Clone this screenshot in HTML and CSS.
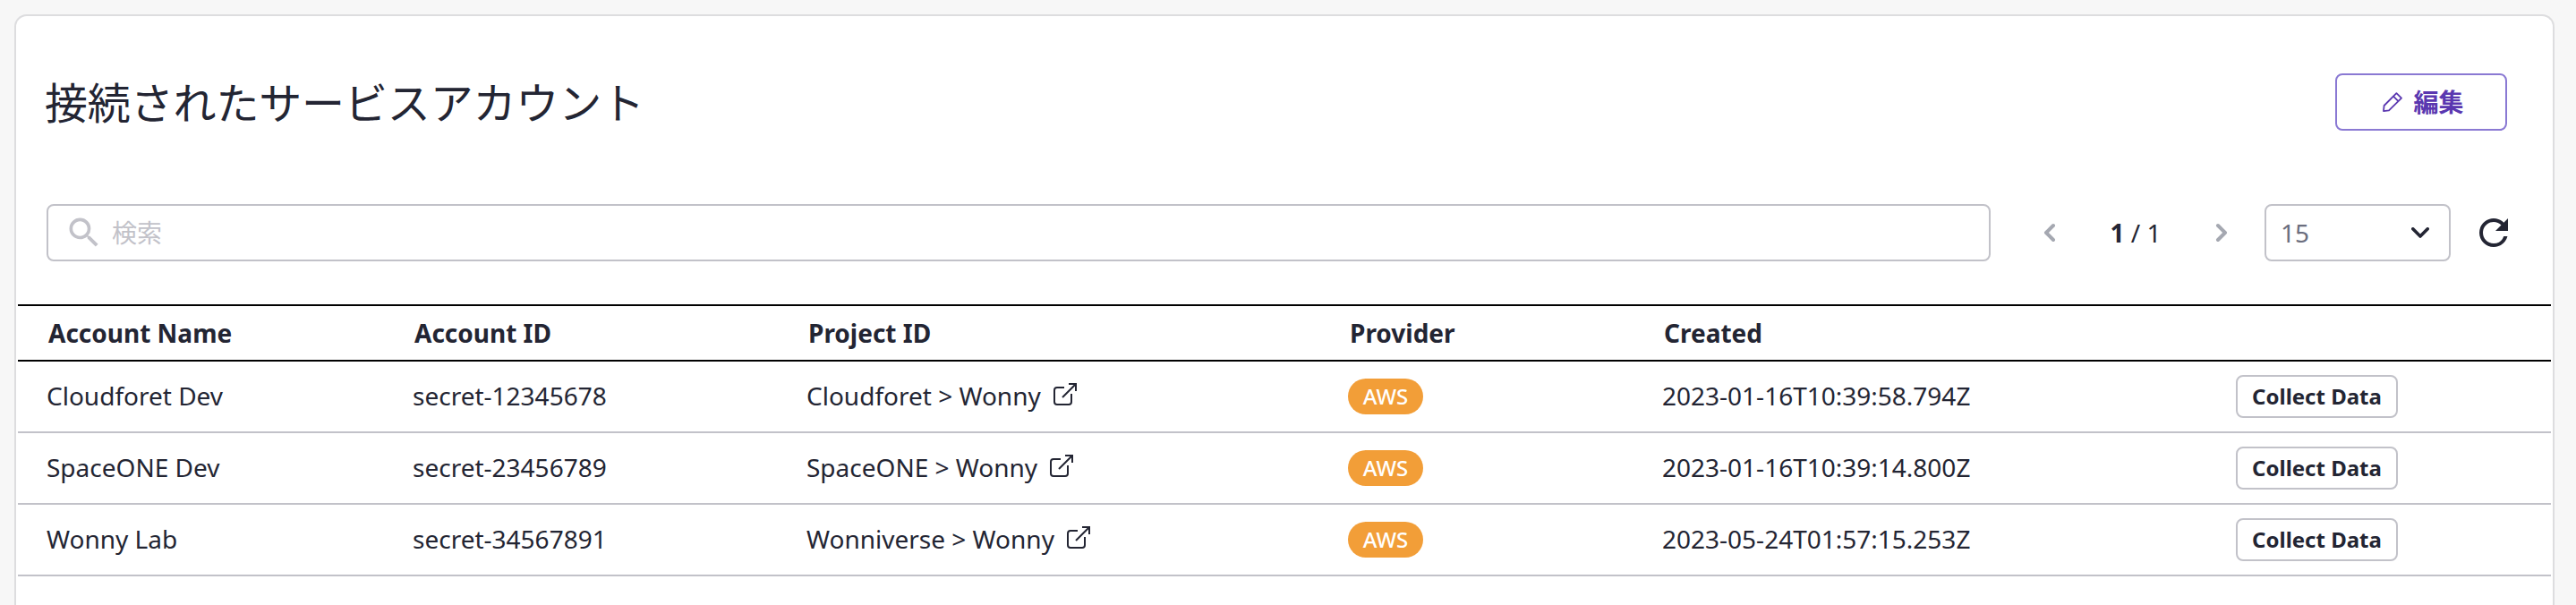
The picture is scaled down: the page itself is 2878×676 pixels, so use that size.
FILE: index.html
```html
<!DOCTYPE html>
<html lang="ja">
<head>
<meta charset="utf-8">
<title>接続されたサービスアカウント</title>
<link rel="stylesheet" href="styles.css">
</head>
<body>
<svg width="0" height="0" class="defs">
  <symbol id="external" viewBox="0 0 26 26"><path d="M12 5H4a3 3 0 0 0-3 3v13a3 3 0 0 0 3 3h13a3 3 0 0 0 3-3v-9M10 16 24 2M17 1h8v8" fill="none" stroke="currentColor" stroke-width="2"/></symbol>
</svg>
<main class="card">
  <header class="head">
    <h1 class="title">接続されたサービスアカウント</h1>
    <button class="edit">
      <svg width="24" height="24" viewBox="0 0 24 24" fill="none" stroke="currentColor" stroke-width="1.8" stroke-linejoin="round"><path d="M2 22.2 2.6 16 16.4 2.1 22 7.7 8 21.4ZM13 5.6l5.5 5.5"/></svg>
      <span>編集</span>
    </button>
  </header>
  <div class="toolbar">
    <div class="search">
      <svg width="44" height="44" viewBox="0 0 24 24" fill="currentColor"><path d="M15.5 14h-.79l-.28-.27A6.47 6.47 0 0 0 16 9.5 6.5 6.5 0 1 0 9.5 16c1.61 0 3.09-.59 4.23-1.57l.27.28v.79l5 4.99L20.49 19l-4.99-5zm-6 0C7.01 14 5 11.99 5 9.5S7.01 5 9.5 5 14 7.01 14 9.5 11.99 14 9.5 14z"/></svg>
      <span>検索</span>
    </div>
    <div class="pager">
      <svg class="arrow" width="14" height="22" viewBox="0 0 14 22"><path d="M11 3 3 11l8 8"/></svg>
      <span class="page"><b>1</b> / 1</span>
      <svg class="arrow" width="14" height="22" viewBox="0 0 14 22"><path d="m3 3 8 8-8 8"/></svg>
    </div>
    <div class="select">
      <span>15</span>
      <svg width="20" height="12" viewBox="0 0 20 12"><path d="m1.8 1.8 8.2 8.2 8.2-8.2"/></svg>
    </div>
    <svg class="refresh" width="48" height="48" viewBox="0 0 24 24" fill="currentColor"><path d="M17.65 6.35A7.96 7.96 0 0 0 12 4c-4.42 0-7.99 3.58-7.99 8s3.57 8 7.99 8c3.73 0 6.84-2.55 7.73-6h-2.08A5.99 5.99 0 0 1 12 18c-3.31 0-6-2.69-6-6s2.69-6 6-6c1.66 0 3.14.69 4.22 1.78L13 11h7V4l-2.35 2.35z"/></svg>
  </div>
  <section class="table">
    <div class="row labels"><span>Account Name</span><span>Account ID</span><span>Project ID</span><span>Provider</span><span>Created</span></div>
    <div class="row">
      <span class="text">Cloudforet Dev</span><span class="text">secret-12345678</span>
      <span class="project"><span class="text">Cloudforet &gt; Wonny</span><svg width="26" height="26"><use href="#external"/></svg></span>
      <span class="badge">AWS</span><span class="text">2023-01-16T10:39:58.794Z</span><button class="collect">Collect Data</button>
    </div>
    <div class="row">
      <span class="text">SpaceONE Dev</span><span class="text">secret-23456789</span>
      <span class="project"><span class="text">SpaceONE &gt; Wonny</span><svg width="26" height="26"><use href="#external"/></svg></span>
      <span class="badge">AWS</span><span class="text">2023-01-16T10:39:14.800Z</span><button class="collect">Collect Data</button>
    </div>
    <div class="row">
      <span class="text">Wonny Lab</span><span class="text">secret-34567891</span>
      <span class="project"><span class="text">Wonniverse &gt; Wonny</span><svg width="26" height="26"><use href="#external"/></svg></span>
      <span class="badge">AWS</span><span class="text">2023-05-24T01:57:15.253Z</span><button class="collect">Collect Data</button>
    </div>
  </section>
</main>
</body>
</html>
```

FILE: styles.css
```css
* { box-sizing: border-box; }
body {
  margin: 0;
  height: 676px;
  padding: 16px 24px 0 16px;
  background: #f7f7f7;
  color: #232533;
  font: 28px/40px "Noto Sans", "Noto Sans CJK JP", sans-serif;
}
.defs { position: absolute; }
svg { display: block; flex: none; }
button { background: #fff; font-family: inherit; color: inherit; padding: 0; }
.card {
  height: 660px;
  border: 2px solid #dddddf;
  border-bottom: 0;
  border-radius: 14px 14px 0 0;
  background: #fff;
  padding: 64px 2px 0;
}
.head {
  display: flex;
  justify-content: space-between;
  align-items: center;
  height: 64px;
  padding: 0 49px 0 30px;
}
.title {
  margin: 0;
  padding-top: 2px;
  font-size: 48px;
  line-height: 64px;
  font-weight: 400;
  letter-spacing: -0.15px;
}
.edit {
  display: flex;
  align-items: center;
  justify-content: center;
  gap: 11px;
  width: 192px;
  height: 64px;
  padding-left: 4px;
  border: 2px solid #8a79d3;
  border-radius: 8px;
  color: #5a37b0;
  font-size: 28px;
  line-height: 40px;
  font-weight: 700;
}
.toolbar { display: flex; align-items: center; height: 64px; margin-top: 82px; padding-left: 32px; }
.search {
  display: flex;
  align-items: center;
  gap: 9px;
  width: 2172px;
  height: 64px;
  padding-left: 18px;
  border: 2px solid #c2c2c9;
  border-radius: 8px;
  color: #c2c2c9;
}
.pager { display: flex; align-items: center; justify-content: space-between; width: 206px; margin-left: 59px; }
.arrow path { fill: none; stroke: #a5a8b1; stroke-width: 4; stroke-linecap: round; stroke-linejoin: round; }
.select {
  display: flex;
  align-items: center;
  justify-content: space-between;
  width: 208px;
  height: 64px;
  margin-left: 41px;
  padding: 0 22px 0 16px;
  border: 2px solid #c2c2c9;
  border-radius: 8px;
  color: #6b6e7e;
}
.select path { fill: none; stroke: #232533; stroke-width: 3.6; stroke-linecap: round; stroke-linejoin: round; }
.refresh { margin-left: 24px; }
.table { margin-top: 48px; border-top: 2px solid #000; }
.row {
  display: grid;
  grid-template-columns: 409px 440px 605px 351px 641px 181px;
  align-items: center;
  height: 80px;
  padding-left: 32px;
  border-bottom: 2px solid #c2c2c9;
}
.labels {
  grid-template-columns: 409px 440px 605px 351px 641px;
  height: 62px;
  padding-left: 34px;
  border-bottom-color: #000;
  font-weight: 700;
}
.text { padding-bottom: 2px; }
.project { display: flex; align-items: center; gap: 14px; }
.project svg { margin-top: -5px; }
.badge {
  width: 84px;
  height: 40px;
  border-radius: 20px;
  background: #f29e38;
  color: #fff;
  font-size: 24px;
  font-weight: 500;
  text-align: center;
}
.collect {
  height: 48px;
  border: 2px solid #c2c2c9;
  border-radius: 8px;
  font-size: 24px;
  line-height: 36px;
  font-weight: 700;
}
```
